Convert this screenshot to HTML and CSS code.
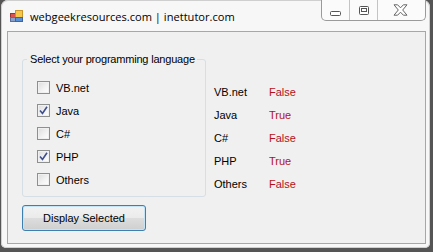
FILE: index.html
```html
<!DOCTYPE html>
<html>
<head>
<meta charset="utf-8">
<link rel="stylesheet" href="styles.css">
</head>
<body>
<div class="window">
  <div class="titlebar">
    <svg class="appicon" width="13" height="12" viewBox="0 0 13 12">
      <rect x="0.5" y="3.5" width="5" height="4" fill="#d9534f" stroke="#a03030"/>
      <rect x="5.5" y="0.5" width="7" height="7" fill="#f5c84a" stroke="#c8962a"/>
      <rect x="0.5" y="7.5" width="5" height="4" fill="#8aa0c8" stroke="#5a6f9a"/>
      <rect x="5.5" y="7.5" width="7" height="4" fill="#5b8fd6" stroke="#3a66a8"/>
    </svg>
    <span class="title">webgeekresources.com | inettutor.com</span>
    <div class="capbtns">
      <div class="cap min">
        <svg width="11" height="5" viewBox="0 0 11 5"><rect x="0.5" y="0.5" width="10" height="4" rx="1" fill="#fff" stroke="#555"/></svg>
      </div>
      <div class="cap max">
        <svg width="10" height="9" viewBox="0 0 10 9"><rect x="0.5" y="0.5" width="9" height="8" rx="1" fill="#fff" stroke="#555"/><rect x="2.5" y="2.5" width="5" height="3" fill="none" stroke="#555"/></svg>
      </div>
      <div class="cap close">
        <svg width="15" height="12" viewBox="0 0 15 12"><path d="M1 0.8 L4.6 0.8 L7.5 3.8 L10.4 0.8 L14 0.8 L9.7 6 L14 11.2 L10.4 11.2 L7.5 8.2 L4.6 11.2 L1 11.2 L5.3 6 Z" fill="#fff" stroke="#666" stroke-width="1" stroke-linejoin="round"/></svg>
      </div>
    </div>
  </div>
  <div class="client">
    <div class="toprow">
      <fieldset class="group">
        <legend>Select your programming language</legend>
        <ul class="checks">
          <li><span class="box"></span>VB.net</li>
          <li><span class="box checked"><svg width="9" height="9" viewBox="0 0 9 9"><path d="M1 4.5 L3.5 7.5 L8 0.8" fill="none" stroke="#3d4f8f" stroke-width="1.6"/></svg></span>Java</li>
          <li><span class="box"></span>C#</li>
          <li><span class="box checked"><svg width="9" height="9" viewBox="0 0 9 9"><path d="M1 4.5 L3.5 7.5 L8 0.8" fill="none" stroke="#3d4f8f" stroke-width="1.6"/></svg></span>PHP</li>
          <li><span class="box"></span>Others</li>
        </ul>
      </fieldset>
      <div class="results">
        <span class="name">VB.net</span><span class="val">False</span>
        <span class="name">Java</span><span class="val">True</span>
        <span class="name">C#</span><span class="val">False</span>
        <span class="name">PHP</span><span class="val">True</span>
        <span class="name">Others</span><span class="val">False</span>
      </div>
    </div>
    <button class="btn">Display Selected</button>
  </div>
</div>
</body>
</html>
```
FILE: styles.css
```css
html, body {
  margin: 0;
  padding: 0;
}
body {
  width: 433px;
  height: 252px;
  background: #555555;
  overflow: hidden;
  font-family: "Liberation Sans", Arial, sans-serif;
}
.window {
  margin-left: 1px;
  width: 429px;
  height: 248px;
  background: #f7f7f7;
  border-radius: 7px 7px 5px 5px;
  box-shadow: inset 0 0 0 1px #cfcfcf;
  display: flex;
  flex-direction: column;
  box-sizing: border-box;
}
.titlebar {
  height: 31px;
  display: flex;
  align-items: flex-start;
  flex: none;
}
.appicon {
  margin: 10px 0 0 9px;
}
.title {
  margin: 9px 0 0 7px;
  font-family: "Open Sans", "Noto Sans", sans-serif;
  font-size: 11.1px;
  line-height: 16px;
  color: #000;
  white-space: nowrap;
}
.capbtns {
  margin-left: auto;
  margin-right: 4px;
  height: 21px;
  display: flex;
  border: 1px solid #9a9a9a;
  border-top: none;
  border-radius: 0 0 5px 5px;
  box-sizing: border-box;
  background: #fbfbfb;
}
.cap {
  display: flex;
  align-items: center;
  justify-content: center;
}
.cap + .cap {
  border-left: 1px solid #c4c4c4;
}
.min { width: 27px; }
.min svg { margin-top: 6px; }
.max { width: 27px; }
.max svg { margin-top: 1px; }
.close { width: 47px; }
.close svg { margin-top: 0; margin-left: -2px; }
.client {
  flex: 1;
  margin: 0 4px 4px 6px;
  border: 1px solid #a7a7a7;
  background: #f0f0f0;
  padding: 0 0 0 14px;
  display: flex;
  flex-direction: column;
  align-items: flex-start;
  font-size: 11px;
  color: #000;
}
.toprow {
  display: flex;
  align-items: flex-start;
}
.group {
  margin: 21px 0 0 0;
  width: 184px;
  height: 144px;
  box-sizing: border-box;
  border: 1px solid #d5dfe5;
  border-radius: 3px;
  padding: 0 0 0 4px;
  min-width: 0;
}
.group legend {
  padding: 0 2px 0 3px;
  font-size: 11px;
  line-height: 13px;
  letter-spacing: -0.2px;
  white-space: nowrap;
}
.checks {
  list-style: none;
  margin: 10px 0 0 10px;
  padding: 0;
}
.checks li {
  height: 23px;
  display: flex;
  align-items: center;
}
.box {
  width: 13px;
  height: 13px;
  box-sizing: border-box;
  border: 1px solid #8e8f8f;
  background: linear-gradient(135deg, #dcdcdc 0%, #f4f4f4 60%, #ffffff 100%);
  box-shadow: inset 0 0 0 1px #f0f0f0;
  margin-right: 6px;
  display: flex;
  align-items: center;
  justify-content: center;
}
.results {
  margin: 48px 0 0 8px;
  display: grid;
  grid-template-columns: 55px auto;
  grid-auto-rows: 23px;
  align-items: center;
}
.val {
  color: #b5111c;
}
.btn {
  margin-top: 8px;
  width: 124px;
  height: 26px;
  font-family: "Liberation Sans", Arial, sans-serif;
  font-size: 11px;
  color: #000;
  border: 1px solid #3c7fb1;
  border-radius: 3px;
  background: linear-gradient(#f2f2f2 0%, #ebebeb 50%, #dddddd 51%, #cfcfcf 100%);
  box-shadow: inset 0 0 0 1px #c4e5f6;
  padding: 0;
}
```
